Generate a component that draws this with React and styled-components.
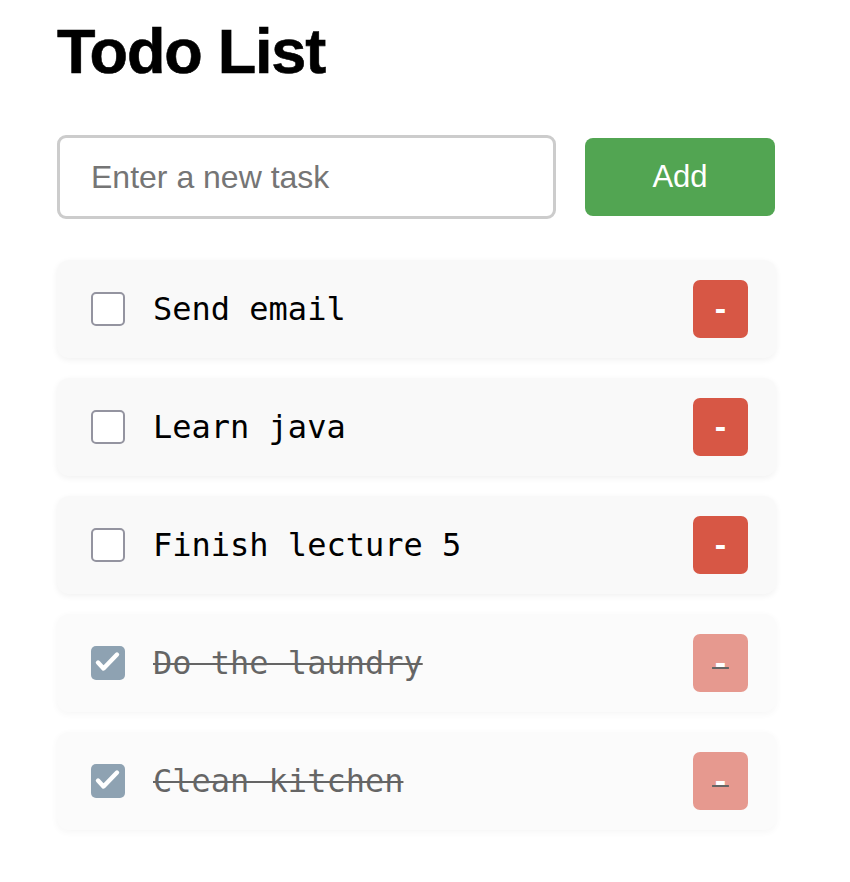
import React, { useState } from 'react';
import styled, { createGlobalStyle, css } from 'styled-components';

const GlobalStyle = createGlobalStyle`
  body {
    margin: 0;
    background: #ffffff;
    font-family: "Liberation Sans", Arial, sans-serif;
  }
`;

// Page wrapper
const Page = styled.main`
  width: 719px;
  padding: 15px 0 40px 57px;
`;

const Title = styled.h1`
  margin: 0;
  font-family: "Liberation Sans", Arial, sans-serif;
  font-weight: 700;
  font-size: 63px;
  line-height: 72px;
  letter-spacing: -1.2px;
  color: #000;
  -webkit-text-stroke: 0.6px #000;
`;

// Input + add button row
const Form = styled.form`
  display: flex;
  align-items: center;
  gap: 29px;
  margin-top: 48px;
`;

const TaskInput = styled.input`
  box-sizing: border-box;
  width: 499px;
  height: 84px;
  padding: 0 0 0 31px;
  border: 3px solid #cccccc;
  border-radius: 9px;
  font-family: "Liberation Sans", Arial, sans-serif;
  font-size: 32px;
  color: #000;
  outline: none;

  &::placeholder {
    color: #757575;
  }
`;

const AddButton = styled.button`
  width: 190px;
  height: 78px;
  border: none;
  border-radius: 8px;
  background: #52a552;
  color: #ffffff;
  font-family: "Liberation Sans", Arial, sans-serif;
  font-size: 31px;
  cursor: pointer;
`;

// Todo list
const List = styled.ul`
  list-style: none;
  margin: 41px 0 0;
  padding: 0;
  display: flex;
  flex-direction: column;
  gap: 20px;
`;

const Item = styled.li`
  box-sizing: border-box;
  display: flex;
  align-items: center;
  height: 98px;
  padding: 0 28px 0 34px;
  background: #f9f9f9;
  border-radius: 12px;
  box-shadow: 0 2px 6px rgba(0, 0, 0, 0.06);
  opacity: ${(p) => (p.$done ? 0.6 : 1)};
`;

const Checkbox = styled.button`
  box-sizing: border-box;
  width: 34px;
  height: 34px;
  padding: 0;
  border-radius: 5px;
  display: flex;
  align-items: center;
  justify-content: center;
  cursor: pointer;
  ${(p) =>
    p.$checked
      ? css`
          border: none;
          background: #446680;
        `
      : css`
          border: 2px solid #9494a0;
          background: #ffffff;
        `}
`;

const Label = styled.span`
  margin-left: 28px;
  font-family: "DejaVu Sans Mono", "Liberation Mono", monospace;
  font-size: 32px;
  color: #000;
  ${(p) =>
    p.$done &&
    css`
      text-decoration: line-through;
      text-decoration-thickness: 2px;
    `}
`;

const DeleteButton = styled.button`
  margin-left: auto;
  width: 55px;
  height: 58px;
  padding: 0;
  border: none;
  border-radius: 7px;
  background: #d75745;
  color: #ffffff;
  font-family: "DejaVu Sans Mono", monospace;
  font-weight: 700;
  font-size: 28px;
  cursor: pointer;
`;

const Dash = styled.span`
  ${(p) =>
    p.$done &&
    css`
      text-decoration: underline;
      text-decoration-color: #000;
      text-decoration-thickness: 2px;
      text-underline-offset: -6px;
    `}
`;

const CheckIcon = () => (
  <svg width="34" height="34" viewBox="0 0 34 34">
    <path
      d="M7 16.5 L12.5 22.5 L26 8.5"
      fill="none"
      stroke="#ffffff"
      strokeWidth="4.4"
      strokeLinecap="round"
      strokeLinejoin="round"
    />
  </svg>
);

const initialTodos = [
  { id: 1, text: 'Send email', done: false },
  { id: 2, text: 'Learn java', done: false },
  { id: 3, text: 'Finish lecture 5', done: false },
  { id: 4, text: 'Do the laundry', done: true },
  { id: 5, text: 'Clean kitchen', done: true },
];

const App = () => {
  const [todos, setTodos] = useState(initialTodos);
  const [value, setValue] = useState('');

  const addTodo = (e) => {
    e.preventDefault();
    if (!value.trim()) return;
    setTodos([...todos, { id: Date.now(), text: value.trim(), done: false }]);
    setValue('');
  };

  const toggle = (id) =>
    setTodos(todos.map((t) => (t.id === id ? { ...t, done: !t.done } : t)));

  const remove = (id) => setTodos(todos.filter((t) => t.id !== id));

  return (
    <Page>
      <GlobalStyle />
      <Title>Todo List</Title>
      <Form onSubmit={addTodo}>
        <TaskInput
          placeholder="Enter a new task"
          value={value}
          onChange={(e) => setValue(e.target.value)}
        />
        <AddButton type="submit">Add</AddButton>
      </Form>
      <List>
        {todos.map((t) => (
          <Item key={t.id} $done={t.done}>
            <Checkbox
              type="button"
              $checked={t.done}
              onClick={() => toggle(t.id)}
              aria-label="toggle"
            >
              {t.done && <CheckIcon />}
            </Checkbox>
            <Label $done={t.done}>{t.text}</Label>
            <DeleteButton type="button" onClick={() => remove(t.id)}>
              <Dash $done={t.done}>-</Dash>
            </DeleteButton>
          </Item>
        ))}
      </List>
    </Page>
  );
};

export default App;
